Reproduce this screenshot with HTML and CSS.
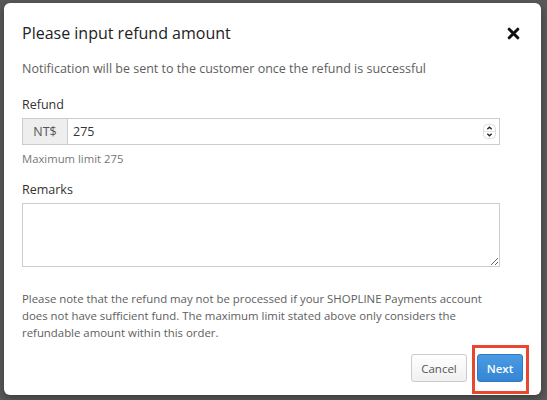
FILE: index.html
```html
<!DOCTYPE html>
<html lang="en">
<head>
<meta charset="utf-8">
<title>Refund</title>
<link rel="stylesheet" href="styles.css">
</head>
<body>
<div class="backdrop">
  <div class="modal">
    <div class="modal-header">
      <h2 class="modal-title">Please input refund amount</h2>
      <button class="close" aria-label="Close">
        <svg width="13" height="13" viewBox="0 0 13 13"><path d="M2.2 2.2 L10.8 10.8 M10.8 2.2 L2.2 10.8" stroke="#111" stroke-width="3" stroke-linecap="round"/></svg>
      </button>
    </div>
    <div class="modal-body">
      <p class="notice">Notification will be sent to the customer once the refund is successful</p>
      <div class="form">
        <label class="label">Refund</label>
        <div class="input-group">
          <span class="addon">NT$</span>
          <div class="input">
            <span class="value">275</span>
            <span class="spinner">
              <svg width="13" height="15" viewBox="0 0 13 15"><rect x="0.5" y="0.5" width="12" height="14" rx="4" fill="#fff" stroke="#ddd"/><line x1="1" y1="7.5" x2="12" y2="7.5" stroke="#e4e4e4"/><path d="M4.3 5.2 L6.5 3.2 L8.7 5.2" fill="none" stroke="#222" stroke-width="1.3"/><path d="M4.3 9.8 L6.5 11.8 L8.7 9.8" fill="none" stroke="#222" stroke-width="1.3"/></svg>
            </span>
          </div>
        </div>
        <p class="help">Maximum limit 275</p>
        <label class="label">Remarks</label>
        <textarea class="textarea"></textarea>
      </div>
      <p class="note">Please note that the refund may not be processed if your SHOPLINE Payments account does not have sufficient fund. The maximum limit stated above only considers the refundable amount within this order.</p>
    </div>
    <div class="modal-footer">
      <button class="btn btn-default">Cancel</button>
      <button class="btn btn-primary">Next</button>
      <span class="highlight"></span>
    </div>
  </div>
</div>
</body>
</html>
```
FILE: styles.css
```css
* { box-sizing: border-box; }
html, body { margin: 0; padding: 0; }
body {
  font-family: "Open Sans", "Noto Sans", sans-serif;
  background: #595959;
  width: 547px;
  height: 400px;
  overflow: hidden;
}
.backdrop {
  height: 400px;
  padding: 3px 6px 5px 4px;
}
.modal {
  width: 537px;
  height: 392px;
  background: #fff;
  border-radius: 6px;
  box-shadow: 0 3px 9px rgba(0,0,0,0.35);
  display: flex;
  flex-direction: column;
}
.modal-header {
  display: flex;
  align-items: center;
  justify-content: space-between;
  padding: 18px 21px 0 18px;
}
.modal-title {
  margin: 0;
  font-size: 16px;
  line-height: 24px;
  font-weight: 400;
  color: #222;
}
.close {
  border: 0;
  background: none;
  padding: 0;
  width: 13px;
  height: 13px;
  display: flex;
}
.modal-body {
  padding: 14px 18px 0 18px;
}
.notice {
  margin: 0;
  font-size: 12.5px;
  line-height: 20px;
  color: #5e5e5e;
}
.form {
  width: 478px;
  margin-top: 16px;
}
.label {
  display: block;
  font-size: 12.5px;
  line-height: 20px;
  color: #333;
  margin-bottom: 3px;
}
.input-group {
  display: flex;
  height: 27px;
}
.addon {
  width: 46px;
  background: #eee;
  border: 1px solid #ccc;
  color: #555;
  font-size: 12.5px;
  line-height: 25px;
  text-align: center;
}
.input {
  flex: 1;
  display: flex;
  align-items: center;
  justify-content: space-between;
  border: 1px solid #ccc;
  border-left: 0;
  padding: 0 3px 0 5px;
}
.value {
  font-size: 12.5px;
  line-height: 20px;
  color: #333;
}
.spinner { display: flex; }
.help {
  margin: 5px 0 13px;
  font-size: 11.3px;
  line-height: 17px;
  color: #777;
}
.textarea {
  display: block;
  width: 478px;
  height: 64px;
  border: 1px solid #ccc;
  border-radius: 0;
  resize: vertical;
  font-family: inherit;
  margin: 0;
}
.note {
  width: 478px;
  margin: 23px 0 0;
  font-size: 11.4px;
  line-height: 17px;
  color: #5e5e5e;
}
.modal-footer {
  position: relative;
  display: flex;
  justify-content: flex-end;
  gap: 10px;
  padding: 13px 18px 0 18px;
}
.btn {
  font-family: inherit;
  font-size: 11.5px;
  height: 28px;
  border-radius: 3px;
  padding: 0 12px;
  cursor: pointer;
}
.btn-default {
  width: 56px;
  padding: 0;
  background: linear-gradient(#fff, #f0f0f0);
  border: 1px solid #ccc;
  color: #555;
}
.btn-primary {
  width: 46px;
  padding: 0;
  background: linear-gradient(#4a9be3, #3486d4);
  border: 1px solid #2f79bf;
  color: #fff;
  font-weight: 600;
}
.highlight {
  position: absolute;
  right: 12px;
  top: 4px;
  width: 57px;
  height: 49px;
  border: 3px solid #e8462f;
  pointer-events: none;
}
```
